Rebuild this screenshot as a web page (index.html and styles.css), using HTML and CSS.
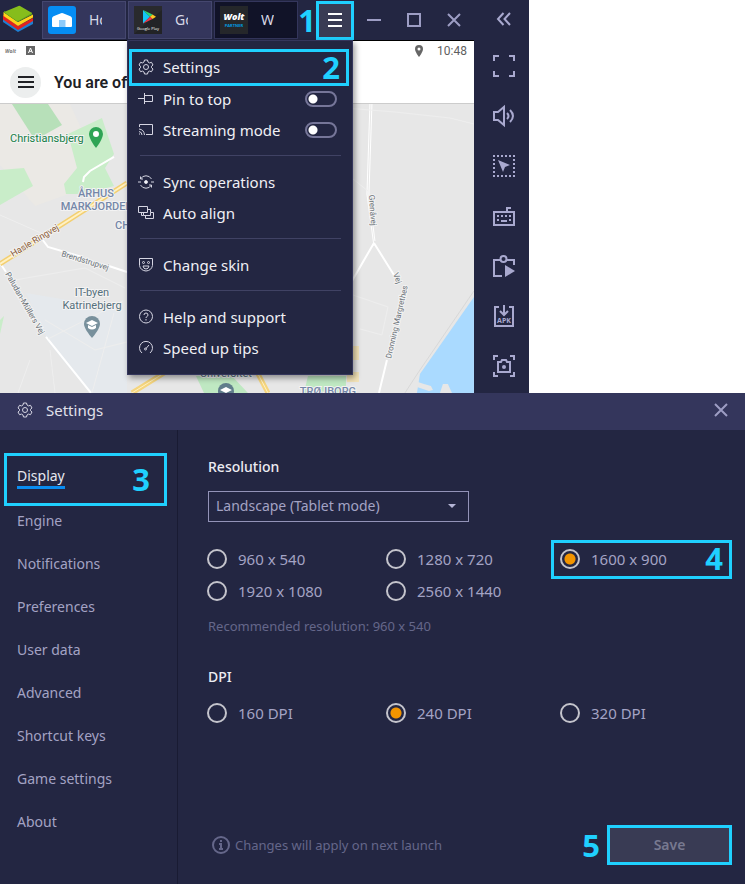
FILE: index.html
```html
<!DOCTYPE html>
<html lang="en">
<head>
<meta charset="utf-8">
<title>BlueStacks settings guide</title>
<link rel="stylesheet" href="styles.css">
</head>
<body>
<main class="page">
  <section class="emulator">
    <div class="player">
      <header class="titlebar">
        <div class="logo">
          <svg width="42" height="40" viewBox="0 0 42 40" aria-hidden="true">
            <path d="M3 22l15 10 15-8v-4L18 26 3 17z" fill="#1d7fd4"/>
            <path d="M3 19.500l15 10.500 15-9v-3L18 26 3 15z" fill="#e2231f"/>
            <path d="M3.500 16l14.500 10 15-8.500v-3L18 22 3.500 12z" fill="#ffd31a"/>
            <path d="M4 12.500l13.500 9.500L32 14.500v-2l-14.500 7L4 11z" fill="#5ea51d"/>
            <path d="M4 12L18.500 6q1-.4 2 .2L32 13l-13 7.500q-1.500.7-3-.2z" fill="#86bd1c"/>
          </svg>
        </div>
        <nav class="tabs">
          <button class="tab">
            <svg width="28" height="28" viewBox="0 0 28 28" aria-hidden="true">
              <rect width="28" height="28" rx="3" fill="#068df3"/>
              <path d="M4 12.500Q4 11 5.500 10.300l7.500-3q1-.4 2 0l7.500 3Q24 11 24 12.500V20q0 1-1 1H5q-1 0-1-1z" fill="#fff"/>
              <path d="M11 14h6.500v7H11z" fill="#8ecbfa"/>
            </svg>
            <span class="tab-label">Ho</span>
          </button>
          <button class="tab">
            <svg width="28" height="28" viewBox="0 0 28 28" aria-hidden="true">
              <rect width="28" height="28" fill="#292a2d"/>
              <path d="M0 28L28 4v24z" fill="#222326"/>
              <path d="M9 4v13.500l7-6.800z" fill="#13c5f4"/>
              <path d="M9 4l7 6.700 2.500-2.300z" fill="#2ed573"/>
              <path d="M18.500 8.400L22 10.700l-3.500 2.400-2.500-2.400z" fill="#ffc720"/>
              <path d="M9 17.500l7-6.800 2.500 2.400z" fill="#f0384d"/>
              <text x="14" y="24" class="play-word">Google Play</text>
            </svg>
            <span class="tab-label">Go</span>
          </button>
          <button class="tab tab-active">
            <svg width="28" height="28" viewBox="0 0 28 28" aria-hidden="true">
              <rect width="28" height="28" fill="#25272a"/>
              <text x="14" y="14" class="wolt-word">Wolt</text>
              <text x="14" y="21" class="partner-word">PARTNER</text>
            </svg>
            <span class="tab-label">W</span>
          </button>
        </nav>
        <span class="step step-one">1</span>
        <button class="menu-button marked" aria-label="Menu">
          <svg width="16" height="16" viewBox="0 0 16 16" aria-hidden="true"><path d="M1 2h14M1 8h14M1 14h14" stroke="#fff" stroke-width="2"/></svg>
        </button>
        <button class="window-button" aria-label="Minimize">
          <svg width="16" height="16" viewBox="0 0 16 16"><path d="M1 8h14"/></svg>
        </button>
        <button class="window-button" aria-label="Maximize">
          <svg width="16" height="16" viewBox="0 0 16 16"><path d="M2 2h12v12H2z"/></svg>
        </button>
        <button class="window-button" aria-label="Close">
          <svg width="16" height="16" viewBox="0 0 16 16"><path d="M2 2l12 12M14 2L2 14"/></svg>
        </button>
      </header>

      <div class="screen">
        <div class="status">
          <svg width="36" height="20" viewBox="0 0 36 20" aria-hidden="true">
            <text x="5" y="12" class="status-word">Wolt</text>
            <path d="M26 5h9v9h-9z" fill="#666"/>
            <path d="M28.500 12l2-5 2 5M29.200 10.300h2.600" fill="none" stroke="#fff"/>
          </svg>
          <svg class="status-pin" width="10" height="12" viewBox="0 0 10 12" aria-hidden="true"><path fill-rule="evenodd" d="M5 0a4 4 0 014 4c0 3-4 8-4 8S1 7 1 4a4 4 0 014-4zm0 2.500a1.500 1.500 0 100 3 1.500 1.500 0 000-3z" fill="#666"/></svg>
          <span>10:48</span>
        </div>
        <div class="app-header">
          <button class="round" aria-label="Open navigation">
            <svg width="16" height="14" viewBox="0 0 16 14"><path d="M0 2h16M0 7h16M0 12h16" stroke="#202125" stroke-width="2"/></svg>
          </button>
          <strong>You are offline</strong>
        </div>
        <svg class="map" viewBox="0 104 474 289" preserveAspectRatio="xMidYMid slice" role="img" aria-label="Map of northern Aarhus">
          <path d="M0 104h474v289H0z" fill="#e7e7e7"/>
          <path d="M0 104h70l25 55 10 22-70 25L0 165z" fill="#ebe9e5"/>
          <path d="M12 104h36l14 21-27 15z" fill="#b7e0b9"/>
          <path d="M68 134l34-16 12 36-9 14 9 18-30 8-18 0-2-10 13-16z" fill="#c9edc9"/>
          <path d="M0 170l24-2 9 18-33 19zM0 320l4-4-4 18z" fill="#c9edc9"/>
          <path d="M26 293l101 17v83H90L48 342z" fill="#e5e9ed"/>
          <path d="M347 346h12v14h-12zM347 372h12v10h-12z" fill="#f3e3b8"/>
          <path d="M196 376h36l16 17h-44zM308 376h38v17h-42z" fill="#bfe8c2"/>
          <path d="M474 297v96h-57l3-19z" fill="#aadaff"/>
          <path d="M418 382l6 2 7 2 2 4-4 1-12-4zM440 393l3-9 5 0 4 9z" fill="#e7e7e7"/>
          <path d="M474 291l-56 82-13 20" fill="none" stroke="#d8d8d8"/>
          <path d="M372 104l-3 90 6 47M370 104l-3 90 7 52" fill="none" stroke="#fff" stroke-width="1"/>
          <path d="M374 243l-22 38M374 243l20 32M387 360l-8 33M83 182l1-5 6-6 24-14M42 239l6 8 34 10M109 266l18 6M0 263l6 9M46 337l45 56" fill="none" stroke="#fff" stroke-width="2"/>
          <path d="M0 264L127 183" fill="none" stroke="#f3cf70" stroke-width="5"/>
          <path d="M0 264L127 183" fill="none" stroke="#fff1c4" stroke-width="2"/>
          <path d="M132 393l42-26M256 370l12 23" fill="none" stroke="#f5d57e" stroke-width="5"/>
          <path d="M132 393l42-26M256 370l12 23" fill="none" stroke="#fff1c4" stroke-width="1"/>
          <path d="M0 215l50 22M15 280l70-12 40 20M48 339l75-38M92 393l22-80M45 320l50 30 32-8M50 350l5 43M30 360l-12 33M353 179l15 12M353 295l35 12-6 28-22-6M345 108l50 4 55 6 24 6" fill="none" stroke="#eee" stroke-width="1"/>
          <path d="M96 127a7 7 0 017 7c0 5-7 14-7 14s-7-9-7-14a7 7 0 017-7z" fill="#2fa455"/>
          <circle cx="96" cy="134" r="3" fill="#fff"/>
          <path d="M92 316a8 8 0 018 8c0 5-8 14-8 14s-8-9-8-14a8 8 0 018-8z" fill="#78909c"/>
          <path d="M86 323l6-3 6 3-6 3zM88 325v3q4 3 8 0v-3l-4 2z" fill="#fff"/>
          <circle cx="226" cy="391" r="8" fill="#607d8b"/>
          <path d="M220 390l6-3 6 3-6 3z" fill="#fff"/>
          <g class="place">
            <text x="10" y="142" class="green">Christiansbjerg</text>
            <text x="96" y="197" class="district">ÅRHUS</text>
            <text x="97" y="210" class="district">MARKJORDEN</text>
            <text x="115" y="229" class="district start">CHR</text>
            <text x="92" y="296" class="campus">IT-byen</text>
            <text x="92" y="309" class="campus">Katrinebjerg</text>
            <text x="226" y="377" class="campus">Universitet</text>
            <text x="328" y="395" class="district">TRØJBORG</text>
          </g>
          <g class="road">
            <text transform="translate(13 257) rotate(-31)" class="brown">Hasle Ringvej</text>
            <text transform="translate(61 256) rotate(17)">Brendstrupvej</text>
            <text transform="translate(5 274) rotate(60)">Paludan-Müllers Vej</text>
            <text transform="translate(369 195) rotate(86)">Grenåvej</text>
            <text transform="translate(391 359) rotate(-77)">Dronning Margrethes</text>
            <text transform="translate(393 274) rotate(68)">Vej</text>
          </g>
        </svg>
      </div>

      <div class="menu">
        <button class="menu-item marked">
          <svg width="16" height="16" viewBox="0 0 16 16"><path d="M6.500 1h3l.5 2 1.500.9 2-.6L15 6l-1.500 1.300v1.400L15 10l-1.500 2.700-2-.6-1.500.9-.5 2h-3L6 13l-1.500-.9-2 .6L1 10l1.500-1.300V7.300L1 6l1.500-2.700 2 .6L6 3z"/><circle cx="8" cy="8" r="2.500"/></svg>
          <span>Settings</span><span class="step">2</span>
        </button>
        <label class="menu-item after-mark">
          <svg width="16" height="16" viewBox="0 0 16 16"><path d="M0 7.500h6M6.500 2v11M6.500 4.500h8v6h-8"/></svg>
          <span>Pin to top</span><input type="checkbox" class="toggle">
        </label>
        <label class="menu-item">
          <svg width="16" height="16" viewBox="0 0 16 16"><path d="M1.500 5V2.500h13v10H8M1 7q5 .5 5.500 6M1 9.500q3 .5 3 3.500M1 12h1"/></svg>
          <span>Streaming mode</span><input type="checkbox" class="toggle">
        </label>
        <hr>
        <button class="menu-item">
          <svg width="16" height="16" viewBox="0 0 16 16"><path d="M2.500 5A6.300 6.300 0 0113.500 5M13.500 11A6.300 6.300 0 012.500 11M2.500 2.500V5H5M13.500 13.500V11H11M0 8h3M13 8h3"/><circle cx="8" cy="8" r="1.500" fill="#fff"/></svg>
          <span>Sync operations</span>
        </button>
        <button class="menu-item">
          <svg width="16" height="16" viewBox="0 0 16 16"><path d="M.500 1.500h9v6h-9zM3.500 7.500v3h2M9.500 4.500h3v3M5.500 7.500v3h7v-3M7.500 10.500v3h8v-6h-3"/></svg>
          <span>Auto align</span>
        </button>
        <hr>
        <button class="menu-item">
          <svg width="16" height="16" viewBox="0 0 16 16"><path d="M1.500 1.500h13v7q-1 5-6.500 5.500-5.500-.5-6.500-5.500zM5 9h6q-.5 3-3 3T5 9"/><circle cx="5.500" cy="5.500" r="1"/><circle cx="10.500" cy="5.500" r="1"/></svg>
          <span>Change skin</span>
        </button>
        <hr>
        <button class="menu-item">
          <svg width="16" height="16" viewBox="0 0 16 16"><circle cx="8" cy="7.500" r="6.500"/><path d="M6 6q0-2 2-2t2 2q0 1-1 1.500T8 9M8 10v1.500"/></svg>
          <span>Help and support</span>
        </button>
        <button class="menu-item">
          <svg width="16" height="16" viewBox="0 0 16 16"><path d="M4 13A6.500 6.500 0 1112 13M8 8.500L11 5"/><circle cx="7.500" cy="9" r="1"/></svg>
          <span>Speed up tips</span>
        </button>
      </div>
    </div>

    <aside class="tools">
      <button aria-label="Collapse"><svg width="24" height="24" viewBox="0 0 24 24"><path d="M11.500 6L6 12l5.500 6M18 6l-5.500 6 5.500 6"/></svg></button>
      <button aria-label="Full screen"><svg width="24" height="24" viewBox="0 0 24 24"><path d="M2 7V2h5M17 2h5v5M22 17v5h-5M7 22H2v-5"/></svg></button>
      <button aria-label="Volume"><svg width="24" height="24" viewBox="0 0 24 24"><path d="M2 8h4l6-5v18l-6-5H2zM15 9q3 3 0 6M18 6q6 6 0 12"/></svg></button>
      <button aria-label="Lock cursor"><svg width="24" height="24" viewBox="0 0 24 24"><path d="M1 2h22M1 22h22M2 5v15M22 5v15" stroke-dasharray="2 2"/><path d="M6 6l12 5-5 2-2 5z" class="solid"/></svg></button>
      <button aria-label="Keyboard"><svg width="24" height="24" viewBox="0 0 24 24"><path d="M2 8h20v13H2zM15 8V4h4M9 17h6"/><path d="M5 12h14M5 16h2M17 16h2" stroke-dasharray="2 2"/></svg></button>
      <button aria-label="Macro recorder"><svg width="24" height="24" viewBox="0 0 24 24"><path d="M10 22H2V6h6M15 6h7v5"/><circle cx="11.500" cy="5" r="3"/><path d="M13 11l10 6-10 6z" class="solid"/></svg></button>
      <button aria-label="Install APK"><svg width="24" height="24" viewBox="0 0 24 24"><path d="M7 3H3v19h18V3h-4M12 1v9M8 7l4 4 4-4"/><text x="12" y="19" class="apk">APK</text></svg></button>
      <button aria-label="Screenshot"><svg width="24" height="24" viewBox="0 0 24 24"><path d="M2 6V2h4M18 2h4v4M22 18v4h-4M6 22H2v-4M6 8h3l1-2h4l1 2h3v10H6z"/><circle cx="12" cy="13" r="2" class="solid"/></svg></button>
    </aside>
  </section>

  <section class="settings">
    <header class="settings-header">
      <svg width="16" height="16" viewBox="0 0 16 16"><path d="M6.500 1h3l.5 2 1.500.9 2-.6L15 6l-1.500 1.300v1.400L15 10l-1.500 2.700-2-.6-1.500.9-.5 2h-3L6 13l-1.500-.9-2 .6L1 10l1.500-1.300V7.300L1 6l1.500-2.700 2 .6L6 3z"/><circle cx="8" cy="8" r="2.500"/></svg>
      <h1>Settings</h1>
      <button class="close" aria-label="Close settings"><svg width="16" height="16" viewBox="0 0 16 16"><path d="M2 2l12 12M14 2L2 14"/></svg></button>
    </header>
    <div class="settings-body">
      <nav class="side">
        <a href="#display" class="marked current"><span class="current-label">Display</span><span class="step">3</span></a>
        <a href="#engine">Engine</a>
        <a href="#notifications">Notifications</a>
        <a href="#preferences">Preferences</a>
        <a href="#user-data">User data</a>
        <a href="#advanced">Advanced</a>
        <a href="#shortcut-keys">Shortcut keys</a>
        <a href="#game-settings">Game settings</a>
        <a href="#about">About</a>
      </nav>
      <form class="panel">
        <h2><label for="mode">Resolution</label></h2>
        <div class="select-wrap">
          <select id="mode"><option>Landscape (Tablet mode)</option></select>
          <svg width="10" height="6" viewBox="0 0 10 6" aria-hidden="true"><path d="M1 1h8L5 5z" fill="#b5b5d6"/></svg>
        </div>
        <div class="options">
          <label><input type="radio" name="res">960 x 540</label>
          <label><input type="radio" name="res">1280 x 720</label>
          <label class="marked"><input type="radio" name="res" checked>1600 x 900<span class="step">4</span></label>
          <label><input type="radio" name="res">1920 x 1080</label>
          <label><input type="radio" name="res">2560 x 1440</label>
        </div>
        <p class="hint">Recommended resolution: 960 x 540</p>
        <h2>DPI</h2>
        <div class="options dpi">
          <label><input type="radio" name="dpi">160 DPI</label>
          <label><input type="radio" name="dpi" checked>240 DPI</label>
          <label class="third"><input type="radio" name="dpi">320 DPI</label>
        </div>
        <footer>
          <svg width="18" height="18" viewBox="0 0 18 18" aria-hidden="true"><circle cx="9" cy="9" r="8"/><path d="M9 4v2M7 8h2v5M7 13h4"/></svg>
          <span>Changes will apply on next launch</span>
          <span class="step">5</span>
          <button type="button" class="save marked">Save</button>
        </footer>
      </form>
    </div>
  </section>
</main>
</body>
</html>
```
FILE: styles.css
```css
* {
  box-sizing: border-box;
}

body {
  margin: 0;
  background: #fff;
  font-family: "Noto Sans", "Open Sans", sans-serif;
  font-size: 14px;
  line-height: 20px;
  color: #a3a3c4;
}

button {
  padding: 0;
  border: 0;
  background: none;
  color: inherit;
  font: inherit;
}

svg {
  flex: none;
}

.page {
  display: flex;
  flex-direction: column;
  min-height: 100vh;
}

.marked {
  border: 3px solid #1fd0ff;
}

.step {
  color: #1fd0ff;
  font-size: 31px;
  line-height: 31px;
  font-weight: 700;
}

/* Emulator window */
.emulator {
  display: flex;
  width: 71%;
  background: #232642;
}

.player {
  position: relative;
  display: flex;
  flex: 1;
  flex-direction: column;
  min-width: 0;
}

.titlebar {
  display: flex;
  align-items: center;
  height: 40px;
}

.logo {
  width: 42px;
}

.logo svg {
  display: block;
}

.tabs {
  display: flex;
  gap: 2px;
}

.tab {
  display: flex;
  align-items: center;
  gap: 13px;
  width: 84px;
  height: 38px;
  padding-left: 5px;
  border: 1px solid #45476f;
  background: #34365c;
}

.tab-active {
  border-color: #34365c;
  background: #111328;
}

.tab-label {
  width: 13px;
  overflow: hidden;
  color: #d8d8e6;
  white-space: nowrap;
  text-align: left;
}

.play-word,
.wolt-word,
.partner-word {
  fill: #fff;
  font-family: "Open Sans", sans-serif;
  font-size: 4px;
  text-anchor: middle;
}

.wolt-word {
  font-size: 9px;
  font-style: italic;
  font-weight: 800;
}

.partner-word {
  fill: #009de0;
  font-weight: 700;
}

.step-one {
  width: 18px;
  text-align: center;
}

.menu-button {
  display: flex;
  align-items: center;
  justify-content: center;
  width: 38px;
  height: 39px;
  background: #393b54;
}

.window-button {
  display: flex;
  flex: 1;
  justify-content: center;
}

.window-button svg,
.close svg {
  fill: none;
  stroke: #9d9dc4;
  stroke-width: 2;
}

.screen {
  display: flex;
  flex: 1;
  flex-direction: column;
  border-top: 1px solid #000;
  background: #fff;
}

.status {
  display: flex;
  align-items: center;
  height: 20px;
  padding-right: 7px;
  color: #5f5f5f;
  font: 400 12px Roboto, sans-serif;
}

.status-word {
  fill: #777;
  font: italic 700 5px "Open Sans", sans-serif;
}

.status-pin {
  margin: 0 13px 0 auto;
}

.app-header {
  display: flex;
  align-items: center;
  gap: 13px;
  height: 42px;
  padding-left: 10px;
  color: #202125;
  font: 16px Roboto, sans-serif;
}

.app-header strong {
  font-weight: 600;
}

.round {
  display: flex;
  align-items: center;
  justify-content: center;
  width: 31px;
  height: 31px;
  border-radius: 50%;
  background: #eceeee;
}

.map {
  display: block;
  width: 100%;
  height: auto;
  border-top: 1px solid #ccc;
}

.place text,
.road text {
  font-family: Roboto, sans-serif;
  stroke: #f3f3f3;
  stroke-width: 2px;
  paint-order: stroke;
}

.place text {
  font-size: 11px;
}

.place .green {
  fill: #188047;
}

.place .district {
  fill: #7587a8;
  font-weight: 500;
  text-anchor: middle;
}

.place .start {
  text-anchor: start;
}

.place .campus {
  fill: #56707c;
  text-anchor: middle;
}

.road text {
  fill: #6b7278;
  font-size: 8px;
}

.road .brown {
  fill: #8a5a34;
  font-size: 9px;
}

/* Drop-down menu over the map */
.menu {
  position: absolute;
  top: 40px;
  left: 127px;
  width: 226px;
  padding: 8px 4px 10px 1px;
  border: 1px solid #34365c;
  background: #232642;
  box-shadow: 2px 3px 6px rgba(0, 0, 0, 0.4);
  color: #f0f0f5;
  font-size: 15px;
}

.menu-item {
  display: flex;
  align-items: center;
  gap: 9px;
  width: 100%;
  height: 31px;
  padding: 0 11px 2px 9px;
}

.menu-item svg,
.settings-header > svg {
  fill: none;
  stroke: #d5d5e2;
  stroke-width: 1;
}

.menu-item.marked {
  width: 220px;
  height: 37px;
  padding: 0 6px 1px;
}

.menu-item .step {
  margin-left: auto;
}

.after-mark {
  margin-top: -2px;
}

.toggle {
  appearance: none;
  width: 32px;
  height: 16px;
  margin: 0 0 0 auto;
  border: 2px solid #767699;
  border-radius: 8px;
  background: radial-gradient(circle at 6px 6px, #fff 4px, transparent 5px);
}

.menu hr {
  height: 1px;
  margin: 9px 7px 11px 11px;
  border: 0;
  background: #404264;
}

/* Tool strip */
.tools {
  display: flex;
  flex-direction: column;
  width: 55px;
  padding-left: 5px;
}

.tools button {
  display: flex;
  align-items: center;
  justify-content: center;
  height: 50px;
}

.tools button:first-child {
  height: 41px;
  padding-bottom: 3px;
}

.tools svg {
  fill: none;
  stroke: #a9a9cf;
  stroke-width: 2;
}

.tools .solid,
.tools .apk {
  fill: #a9a9cf;
  stroke: none;
}

.apk {
  font: 700 7px "Open Sans", sans-serif;
  text-anchor: middle;
}

/* Settings window */
.settings {
  display: flex;
  flex: 1;
  flex-direction: column;
  background: #232642;
}

.settings-header {
  display: flex;
  align-items: center;
  height: 37px;
  padding: 0 16px 2px 17px;
  background: #34365c;
}

.settings-header h1 {
  margin: 0 auto 0 13px;
  color: #e0e0ea;
  font-size: 15px;
  font-weight: 400;
}

.close {
  display: flex;
}

.settings-body {
  display: flex;
  flex: 1;
}

.side {
  display: flex;
  flex-direction: column;
  width: 178px;
  padding: 23px 10px 0 4px;
  border-right: 1px solid #191b33;
}

.side a {
  display: flex;
  align-items: center;
  height: 43px;
  padding-left: 13px;
  color: inherit;
  text-decoration: none;
}

.side .current {
  justify-content: space-between;
  height: 53px;
  margin-bottom: -6px;
  padding: 0 14px 0 10px;
  color: #e6e6ee;
}

.current-label {
  margin-bottom: 3px;
  border-bottom: 3px solid #0a8cf0;
}

.panel {
  display: flex;
  flex: 1;
  flex-direction: column;
  padding: 26px 13px 19px 29px;
}

.panel h2 {
  margin: 0 0 0 1px;
  color: #ececf2;
  font-size: 14px;
  line-height: 22px;
  font-weight: 500;
}

.select-wrap {
  display: flex;
  align-items: center;
  width: 261px;
  margin: 13px 0 21px 1px;
}

.select-wrap select {
  appearance: none;
  width: 100%;
  height: 31px;
  padding: 0 7px;
  border: 1px solid #9393b8;
  border-radius: 0;
  background: none;
  color: inherit;
  font: inherit;
}

.select-wrap svg {
  margin-left: -22px;
  pointer-events: none;
}

.options {
  display: grid;
  grid-template-columns: 179fr 165fr 181fr;
  grid-auto-rows: 32px;
  font-size: 15px;
}

.options label {
  display: flex;
  align-items: center;
  gap: 11px;
}

.options .marked {
  margin: -3px 0 -4px;
  padding: 0 6px 1px;
}

.options .third {
  padding-left: 9px;
}

.options .step {
  margin-left: auto;
}

.options input {
  appearance: none;
  width: 20px;
  height: 20px;
  margin: 0;
  border: 2px solid #c4c4cc;
  border-radius: 50%;
}

.options input:checked {
  background: radial-gradient(circle, #f29400 5px, transparent 6px);
}

.hint {
  margin: 9px 0 30px 1px;
  color: #65678a;
  font-size: 13px;
}

.dpi {
  margin-top: 9px;
}

.panel footer {
  display: flex;
  align-items: center;
  margin-top: auto;
  padding-left: 5px;
  color: #65678a;
  font-size: 13px;
}

.panel footer svg {
  margin-right: 5px;
  fill: none;
  stroke: #65678a;
  stroke-width: 2;
}

.panel footer .step {
  margin: 0 7px 0 auto;
}

.save {
  width: 125px;
  height: 40px;
  background: #393b54;
  color: #777990;
  font-size: 14px;
  font-weight: 600;
}
```
